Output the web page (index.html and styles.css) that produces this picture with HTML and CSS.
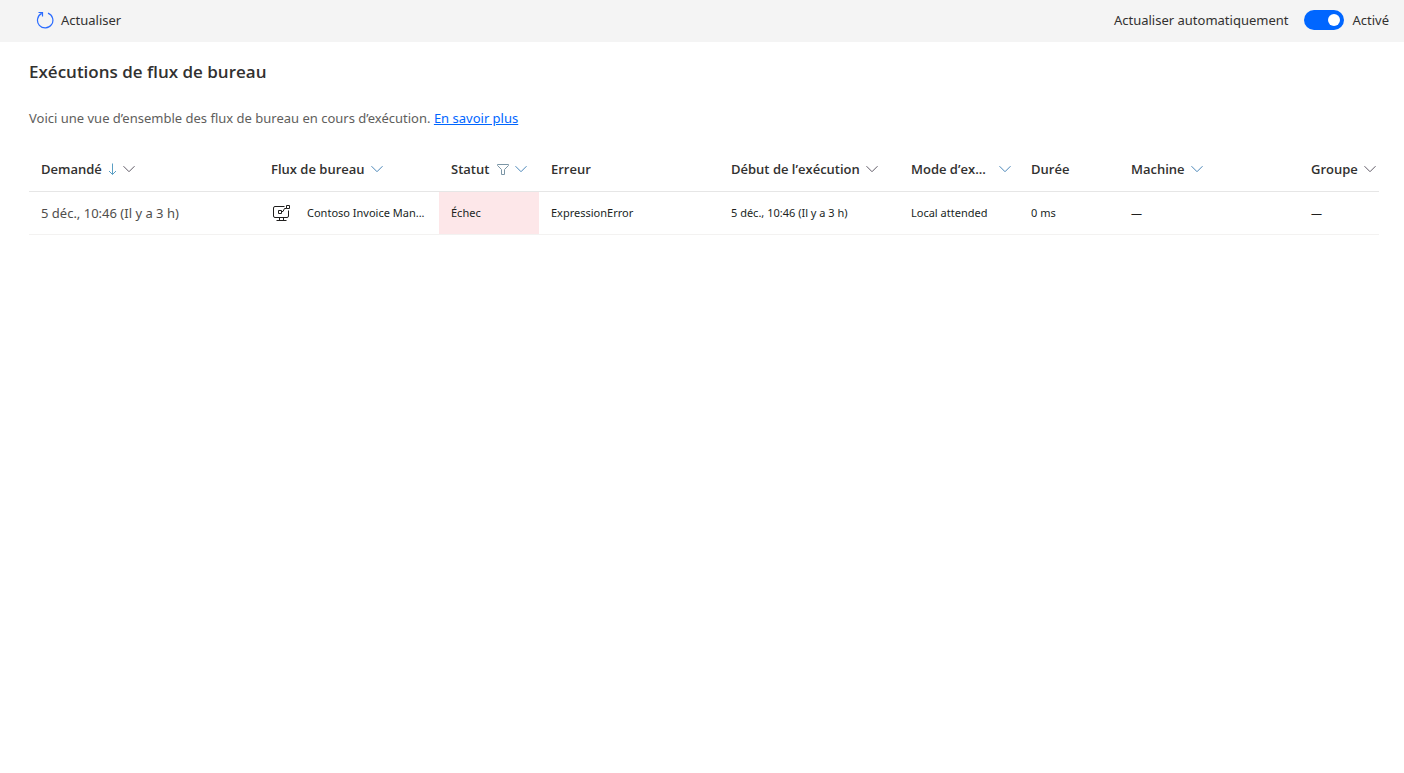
FILE: index.html
```html
<!DOCTYPE html>
<html lang="fr">
<head>
<meta charset="utf-8">
<meta name="viewport" content="width=device-width, initial-scale=1">
<title>Exécutions de flux de bureau</title>
<link rel="stylesheet" href="styles.css">
</head>
<body>
<svg class="symbols" aria-hidden="true">
  <symbol id="chevron" viewBox="0 0 12 12"><path d="M.5 3.2 6 8.7l5.500-5.500" fill="none" stroke="currentColor"/></symbol>
</svg>
<header class="toolbar">
  <button class="refresh" type="button">
    <svg class="refresh-icon" viewBox="0 0 18 18" aria-hidden="true"><path d="M12 2.100a7.700 7.700 0 1 1-6.300.3M2.500 1.500h4v4" fill="none" stroke="currentColor" stroke-width="1.200"/></svg>
    <span>Actualiser</span>
  </button>
  <div class="auto-refresh">
    <label for="auto">Actualiser automatiquement</label>
    <input class="switch" id="auto" type="checkbox" role="switch" checked>
    <span class="switch-state">Activé</span>
  </div>
</header>
<main class="content">
  <h1 class="title">Exécutions de flux de bureau</h1>
  <p class="intro">Voici une vue d’ensemble des flux de bureau en cours d’exécution. <a class="link" href="#">En savoir plus</a></p>
  <table class="runs">
    <colgroup>
      <col class="col-requested"><col class="col-wide"><col class="col-narrow"><col class="col-wide"><col class="col-wide"><col class="col-mode"><col class="col-narrow"><col class="col-wide"><col>
    </colgroup>
    <thead>
      <tr>
        <th scope="col"><button class="sort" type="button"><span class="name">Demandé</span><svg class="arrow" viewBox="0 0 10 14" aria-hidden="true"><path d="M5.500 1.500v11M2 9l3.500 3.500L9 9" fill="none" stroke="currentColor"/></svg><svg class="chevron"><use href="#chevron"/></svg></button></th>
        <th scope="col"><button class="sort" type="button"><span class="name">Flux de bureau</span><svg class="chevron chevron-blue"><use href="#chevron"/></svg></button></th>
        <th scope="col"><button class="sort" type="button"><span class="name">Statut</span><svg class="filter" viewBox="0 0 12 12" aria-hidden="true"><path d="M.5 1.500h11v1L7.500 6.500v5h-3v-5L.5 2.500z" fill="none" stroke="currentColor"/></svg><svg class="chevron chevron-blue"><use href="#chevron"/></svg></button></th>
        <th scope="col">Erreur</th>
        <th scope="col"><button class="sort" type="button"><span class="name">Début de l’exécution</span><svg class="chevron"><use href="#chevron"/></svg></button></th>
        <th scope="col"><button class="sort sort-fill" type="button"><span class="name">Mode d’ex...</span><svg class="chevron chevron-blue"><use href="#chevron"/></svg></button></th>
        <th scope="col">Durée</th>
        <th scope="col"><button class="sort" type="button"><span class="name">Machine</span><svg class="chevron chevron-blue"><use href="#chevron"/></svg></button></th>
        <th scope="col"><button class="sort" type="button"><span class="name">Groupe</span><svg class="chevron"><use href="#chevron"/></svg></button></th>
      </tr>
    </thead>
    <tbody>
      <tr>
        <td class="requested">5 déc., 10:46 (Il y a 3 h)</td>
        <td><div class="flow"><svg class="flow-icon" viewBox="0 0 20 18" aria-hidden="true"><path d="M13.500 2.500H4a1.500 1.500 0 0 0-1.500 1.500v8A1.500 1.500 0 0 0 4 13.500h12a1.500 1.500 0 0 0 1.500-1.500V6.500M8.500 13.500v3M12.500 13.500v3M5.500 16.500h10M7.500 6.500h3v3h-3zM15.500 1.500h3v3h-3zM10.500 7.500h1.500l1.500-3h2" fill="none" stroke="currentColor"/></svg><span class="name">Contoso Invoice Man...</span></div></td>
        <td class="failed">Échec</td>
        <td>ExpressionError</td>
        <td>5 déc., 10:46 (Il y a 3 h)</td>
        <td>Local attended</td>
        <td>0 ms</td>
        <td>—</td>
        <td>—</td>
      </tr>
    </tbody>
  </table>
</main>
</body>
</html>
```
FILE: styles.css
```css
* {
  box-sizing: border-box;
}

body {
  margin: 0;
  background: #fff;
  color: #323130;
  font-family: "Noto Sans", "Open Sans", sans-serif;
  font-size: 13px;
  line-height: 20px;
}

button {
  padding: 0;
  border: 0;
  background: none;
  color: inherit;
  font: inherit;
  cursor: pointer;
}

svg {
  flex: none;
}

.symbols {
  display: none;
}

.toolbar {
  display: flex;
  align-items: center;
  justify-content: space-between;
  height: 42px;
  padding: 0 15px 2px 36px;
  background: #f4f4f4;
}

.refresh {
  display: flex;
  align-items: center;
  gap: 7px;
}

.refresh-icon {
  width: 18px;
  height: 18px;
  color: #2b6cff;
}

.auto-refresh {
  display: flex;
  align-items: center;
}

.switch {
  display: flex;
  align-items: center;
  justify-content: flex-end;
  width: 40px;
  height: 20px;
  margin: 0 8px 0 16px;
  padding: 0 4px;
  border-radius: 10px;
  background: #0066ff;
  appearance: none;
  cursor: pointer;
}

.switch::before {
  width: 12px;
  height: 12px;
  border-radius: 50%;
  background: #fff;
  content: "";
}

.switch:not(:checked) {
  justify-content: flex-start;
  background: #8a8886;
}

.content {
  padding: 18px 25px 0 29px;
}

.title {
  margin: 0 0 24px;
  font-family: "Open Sans", sans-serif;
  font-size: 17px;
  font-weight: 600;
  line-height: 24px;
}

.intro {
  margin: 0 0 20px;
  color: #605e5c;
}

.link {
  color: #0066ff;
}

.runs {
  width: 100%;
  border-collapse: separate;
  border-spacing: 0;
  table-layout: fixed;
}

.col-requested {
  width: 230px;
}

.col-wide {
  width: 180px;
}

.col-mode {
  width: 120px;
}

.col-narrow {
  width: 100px;
}

.runs th {
  height: 44px;
  padding: 0 0 2px 12px;
  border-bottom: 1px solid #e6e6e6;
  font-family: "Open Sans", sans-serif;
  font-weight: 600;
  text-align: left;
}

.sort {
  display: flex;
  align-items: center;
  gap: 6px;
}

.sort-fill {
  width: 100%;
  padding-right: 8px;
  justify-content: space-between;
}

.name {
  white-space: nowrap;
}

.chevron {
  width: 12px;
  height: 12px;
  color: #5f5a66;
}

.chevron-blue {
  color: #4a86b8;
}

.arrow {
  width: 10px;
  height: 14px;
  color: #5b9fc4;
}

.arrow,
.arrow + .chevron {
  margin-left: -1px;
  margin-right: 1px;
}

.filter {
  width: 12px;
  height: 12px;
  margin-left: 2px;
  color: #7c96a6;
}

.runs td {
  height: 43px;
  padding: 0 10px 0 12px;
  border-bottom: 1px solid #f3f2f1;
  color: #201f1e;
  font-size: 11px;
  white-space: nowrap;
}

.runs .requested {
  color: #504e4c;
  font-size: 13px;
}

.runs .failed {
  background: #fde7e9;
}

.flow {
  display: flex;
  align-items: center;
  gap: 16px;
}

.flow-icon {
  width: 20px;
  height: 18px;
}
```
